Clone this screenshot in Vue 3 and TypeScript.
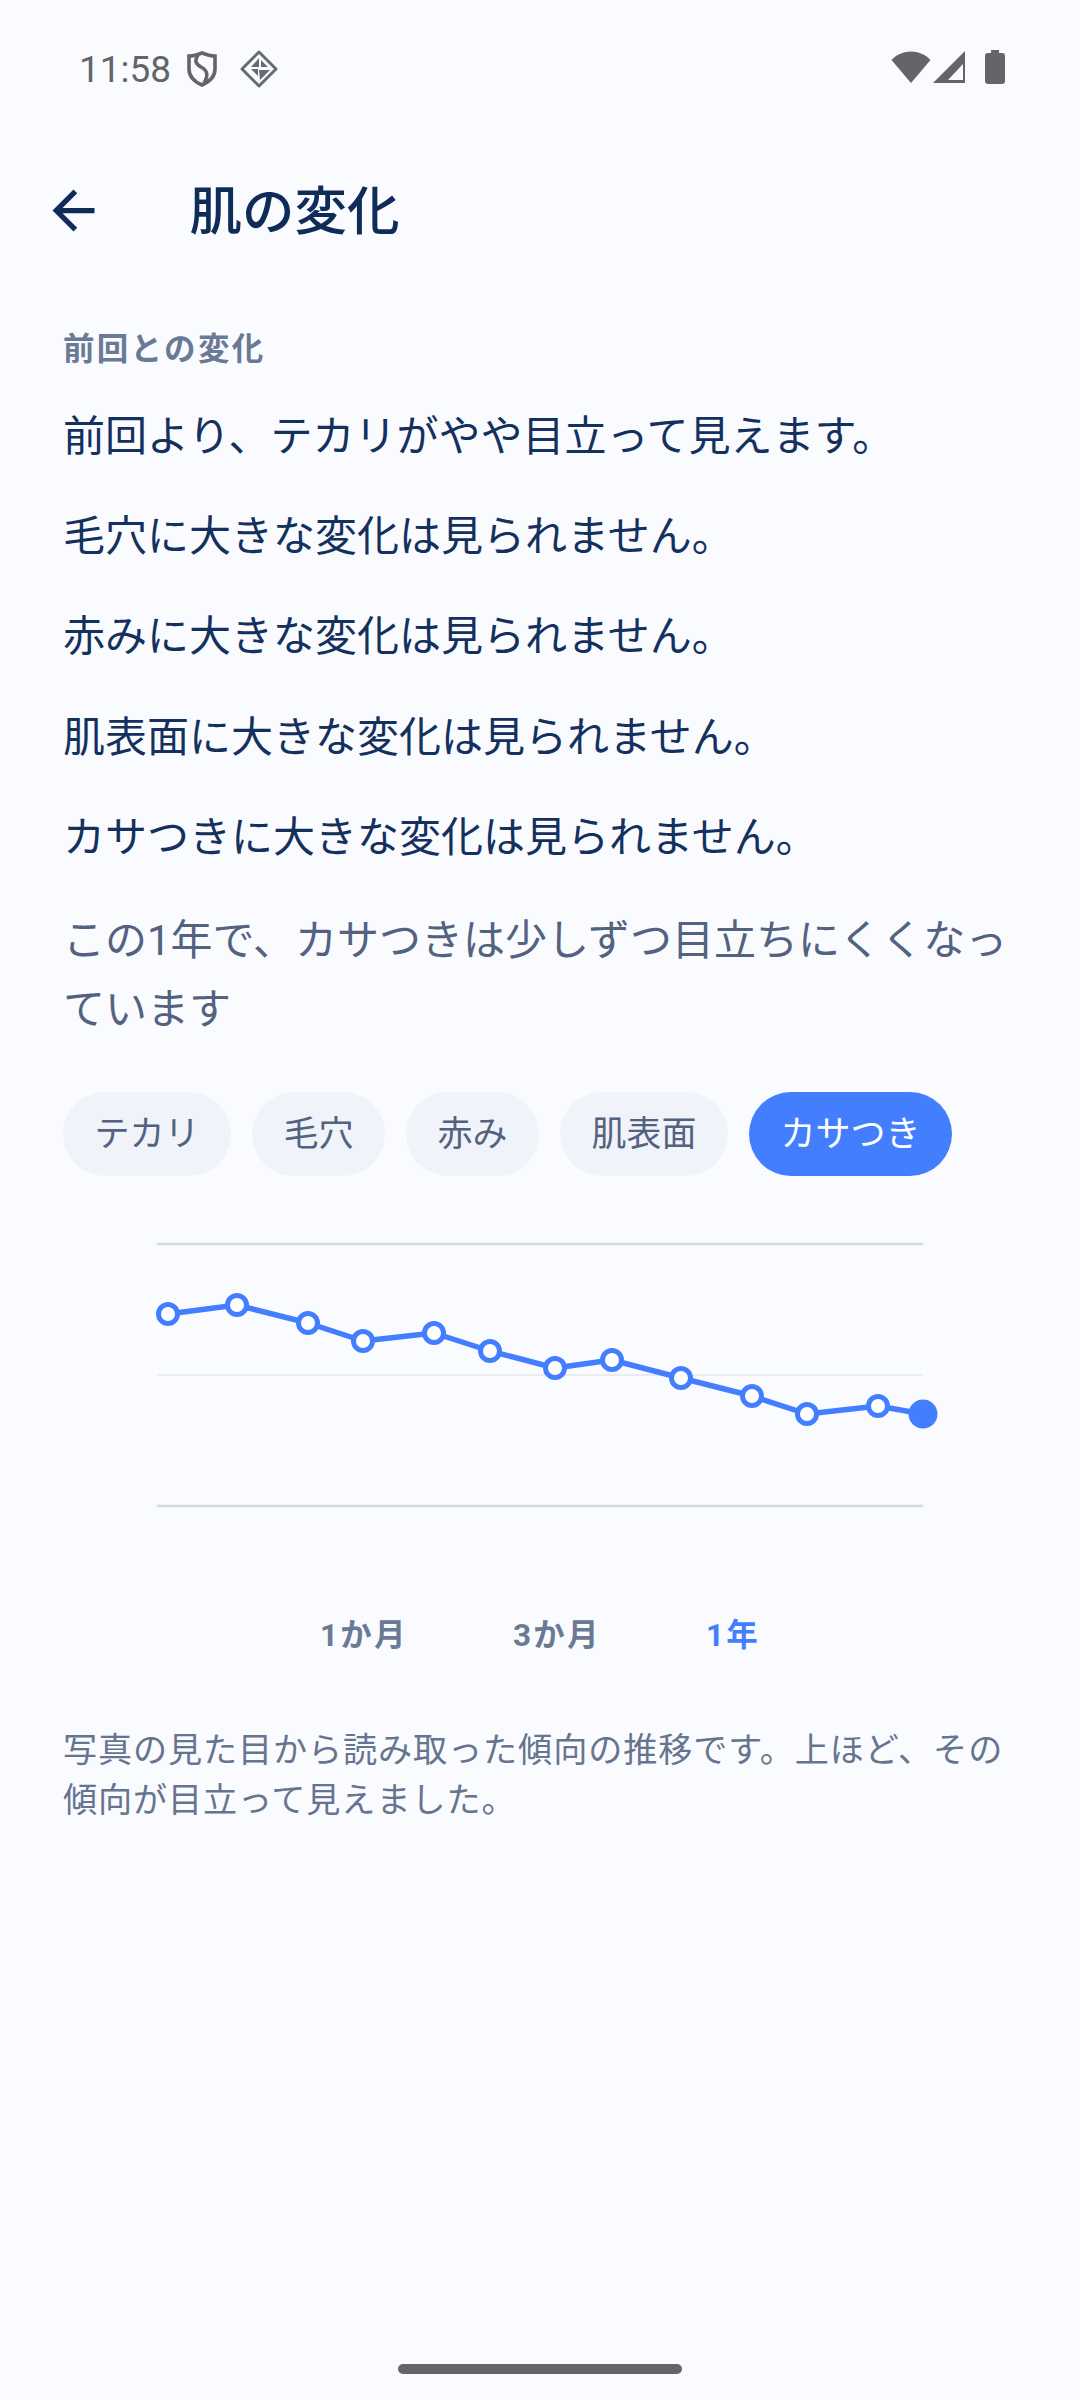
<script setup lang="ts">
const changes = [
  '前回より、テカリがやや目立って見えます。',
  '毛穴に大きな変化は見られません。',
  '赤みに大きな変化は見られません。',
  '肌表面に大きな変化は見られません。',
  'カサつきに大きな変化は見られません。',
]
const chips = ['テカリ', '毛穴', '赤み', '肌表面', 'カサつき']
const ranges = ['1か月', '3か月', '1年']

// chart coordinates, svg starts at y=1230
const points: [number, number][] = [
  [168, 84], [237, 75], [308, 93], [363, 111], [434, 103], [490, 121], [555, 138],
  [612, 130], [681, 148], [752, 166], [807, 184], [878, 176], [923, 184],
]
const linePoints = points.map((p) => p.join(',')).join(' ')
const dots = points.slice(0, -1)
const last = points[points.length - 1]
</script>

<template>
  <div class="screen">
    <div class="status">
      <div class="status-left">
        <span class="time">11:58</span>
        <svg class="shield" width="30" height="36" viewBox="0 0 30 36">
          <path d="M15 2 C20 4 24 5 28 5 V18 C28 26 22 31 15 34 C8 31 2 26 2 18 V5 C6 5 10 4 15 2 Z" fill="none" stroke="#636568" stroke-width="3.6" />
          <path d="M11 4 C7 10 9 13 14 16 C20 19 22 24 17 32" fill="none" stroke="#636568" stroke-width="3.6" />
        </svg>
        <svg class="diamond" width="38" height="38" viewBox="0 0 38 38">
          <path d="M19 2 L36 19 L19 36 L2 19 Z" fill="none" stroke="#666b73" stroke-width="3" stroke-linejoin="round" />
          <path d="M19 8 L19 17 L11 17 Z M21 10 L28 17 L21 17 Z M11 19 L18 19 L18 26 Z M19 20 L30 20 L20 30 Z" fill="#666b73" />
        </svg>
      </div>
      <div class="status-right">
        <svg width="40" height="34" viewBox="0 0 40 34">
          <path d="M0.5 10 C11 -1.5 29 -1.5 39.5 10 L20 33 Z" fill="#636568" />
        </svg>
        <svg width="34" height="34" viewBox="0 0 34 34">
          <path fill-rule="evenodd" d="M32 1 V33 H0 Z M30 14 L15 30 H30 Z" fill="#636568" />
        </svg>
        <svg class="battery" width="20" height="34" viewBox="0 0 20 34">
          <path d="M6 0 H14 V3 H17 C19 3 20 4 20 6 V31 C20 33 19 34 17 34 H3 C1 34 0 33 0 31 V6 C0 4 1 3 3 3 H6 Z" fill="#636568" />
        </svg>
      </div>
    </div>

    <header class="appbar">
      <svg class="back" width="63" height="63" viewBox="0 0 24 24">
        <path d="M20 11H7.83l5.59-5.59L12 4l-8 8 8 8 1.41-1.41L7.83 13H20z" fill="#0f2c59" />
      </svg>
      <h1 class="title">肌の変化</h1>
    </header>

    <main class="content">
      <div class="label">前回との変化</div>
      <p v-for="line in changes" :key="line" class="change">{{ line }}</p>
      <p class="trend">この1年で、カサつきは少しずつ目立ちにくくなっています</p>

      <div class="chips">
        <span v-for="chip in chips" :key="chip" class="chip" :class="{ active: chip === 'カサつき' }">{{ chip }}</span>
      </div>

      <svg class="chart" width="1080" height="290" viewBox="0 0 1080 290">
        <line x1="157" x2="923" y1="14" y2="14" stroke="#d3d9e3" stroke-width="2.6" />
        <line x1="157" x2="923" y1="145" y2="145" stroke="#e8ebf2" stroke-width="2" />
        <line x1="157" x2="923" y1="276" y2="276" stroke="#d3d9e3" stroke-width="2.6" />
        <polyline :points="linePoints" fill="none" stroke="#437eff" stroke-width="5.5" stroke-linejoin="round" />
        <circle v-for="d in dots" :key="d[0]" :cx="d[0]" :cy="d[1]" r="9.5" fill="#fff" stroke="#437eff" stroke-width="5" />
        <circle :cx="last[0]" :cy="last[1]" r="14.5" fill="#437eff" />
      </svg>

      <div class="ranges">
        <span v-for="r in ranges" :key="r" class="range" :class="{ active: r === '1年' }">{{ r }}</span>
      </div>

      <p class="note">写真の見た目から読み取った傾向の推移です。上ほど、その傾向が目立って見えました。</p>
    </main>

    <div class="home"></div>
  </div>
</template>

<style scoped>
.screen {
  width: 1080px;
  height: 2400px;
  background: #fafbff;
  display: flex;
  flex-direction: column;
  font-family: Roboto, "Noto Sans CJK JP", sans-serif;
  overflow: hidden;
}
.status {
  height: 136px;
  padding: 0 75px 0 79px;
  display: flex;
  justify-content: space-between;
  align-items: flex-start;
  box-sizing: border-box;
}
.status-left {
  display: flex;
  align-items: center;
  margin-top: 50px;
  height: 38px;
}
.time {
  font-size: 37px;
  color: #636568;
  width: 108px;
}
.diamond { margin-left: 23px; }
.status-right {
  display: flex;
  align-items: center;
  margin-top: 50px;
  gap: 2px;
}
.battery { margin-left: 16px; }
.appbar {
  height: 148px;
  display: flex;
  align-items: center;
  padding-left: 41.5px;
}
.back { flex-shrink: 0; }
.title {
  margin: 0 0 6px 85px;
  font-size: 52.5px;
  font-weight: 500;
  color: #0f2c59;
}
.content {
  padding: 0 63px;
  display: flex;
  flex-direction: column;
}
.label {
  margin-top: 46px;
  margin-bottom: 16.5px;
  font-size: 31.5px;
  font-weight: 700;
  letter-spacing: 2.3px;
  line-height: 40px;
  color: #6b7a94;
}
.change {
  margin: 0;
  font-size: 42px;
  line-height: 100.4px;
  color: #14315e;
}
.trend {
  margin: 0;
  padding-top: 17.5px;
  font-size: 42px;
  line-height: 69px;
  color: #53627f;
}
.chips {
  display: flex;
  gap: 21px;
  margin-top: 48px;
}
.chip {
  height: 84px;
  line-height: 86px;
  padding: 0 31.5px;
  border-radius: 42px;
  font-size: 35px;
  background: #f0f3f9;
  color: #53627f;
}
.chip.active {
  background: #437eff;
  color: #fff;
}
.chart {
  display: block;
  margin: 54px 0 0 -63px;
  flex-shrink: 0;
}
.ranges {
  display: flex;
  justify-content: center;
  gap: 105px;
  margin-top: 95.5px;
}
.range {
  font-size: 31.5px;
  font-weight: 700;
  letter-spacing: 2.3px;
  line-height: 40px;
  color: #6b7a94;
}
.range.active { color: #437eff; }
.note {
  margin: 69px 0 0;
  font-size: 34.125px;
  letter-spacing: 0.9px;
  line-height: 50.5px;
  color: #66758f;
}
.home {
  width: 284px;
  height: 10px;
  border-radius: 5px;
  background: #636568;
  margin: auto auto 26px;
}
</style>

<style>
body { background: #fafbff; }
</style>
